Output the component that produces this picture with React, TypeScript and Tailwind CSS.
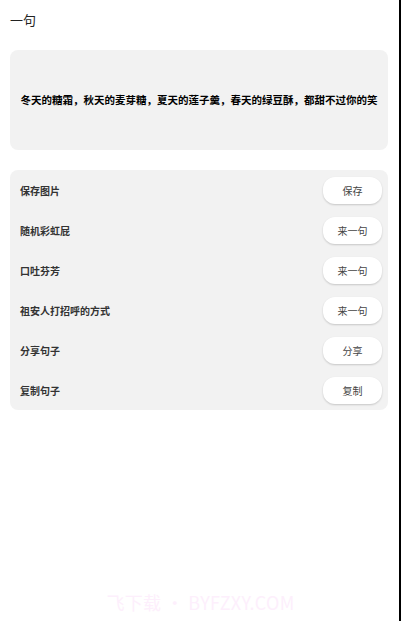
import React from 'react';

const options = [
  { label: '保存图片', action: '保存' },
  { label: '随机彩虹屁', action: '来一句' },
  { label: '口吐芬芳', action: '来一句' },
  { label: '祖安人打招呼的方式', action: '来一句' },
  { label: '分享句子', action: '分享' },
  { label: '复制句子', action: '复制' },
];

const font = { fontFamily: '"Noto Sans CJK SC", "Noto Sans", sans-serif' };

export default function App() {
  return (
    <div className="flex h-[621px] w-[401px] bg-white" style={font}>
      <div className="flex w-[399px] flex-col">
        {/* Header */}
        <div className="flex h-[38px] items-center px-[10px]">
          <span className="text-[13px] leading-none text-[#222]">一句</span>
        </div>

        {/* Quote card */}
        <div className="mx-[10px] mt-[12px] flex h-[100px] w-[378px] items-center justify-center rounded-[8px] bg-[#f2f2f2]">
          <p className="whitespace-nowrap text-[10.5px] font-bold leading-none text-black">
            冬天的糖霜，秋天的麦芽糖，夏天的莲子羹，春天的绿豆酥，都甜不过你的笑
          </p>
        </div>

        {/* Options */}
        <div className="mx-[10px] mt-[20px] flex w-[378px] flex-col rounded-[8px] bg-[#f2f2f2]">
          {options.map((o) => (
            <div key={o.label} className="flex h-[40px] items-center justify-between pl-[10px] pr-[6px]">
              <span className="text-[10px] font-bold text-[#333]">{o.label}</span>
              <button className="flex h-[27px] w-[59px] items-center justify-center rounded-[12px] bg-white text-[10px] text-[#444] shadow-[0_1px_2px_rgba(0,0,0,0.18)]">
                {o.action}
              </button>
            </div>
          ))}
        </div>

        <div className="flex-1" />

        {/* Watermark */}
        <div className="mb-[10px] flex justify-center pl-[2px]">
          <span className="text-[18px] leading-none tracking-[0.3px] text-[#fdeffc]" style={{ fontFamily: '"Noto Sans CJK SC", "Liberation Sans", sans-serif' }}>
            飞下载 • BYFZXY.COM
          </span>
        </div>
      </div>
      <div className="w-[2px] bg-black" />
    </div>
  );
}
